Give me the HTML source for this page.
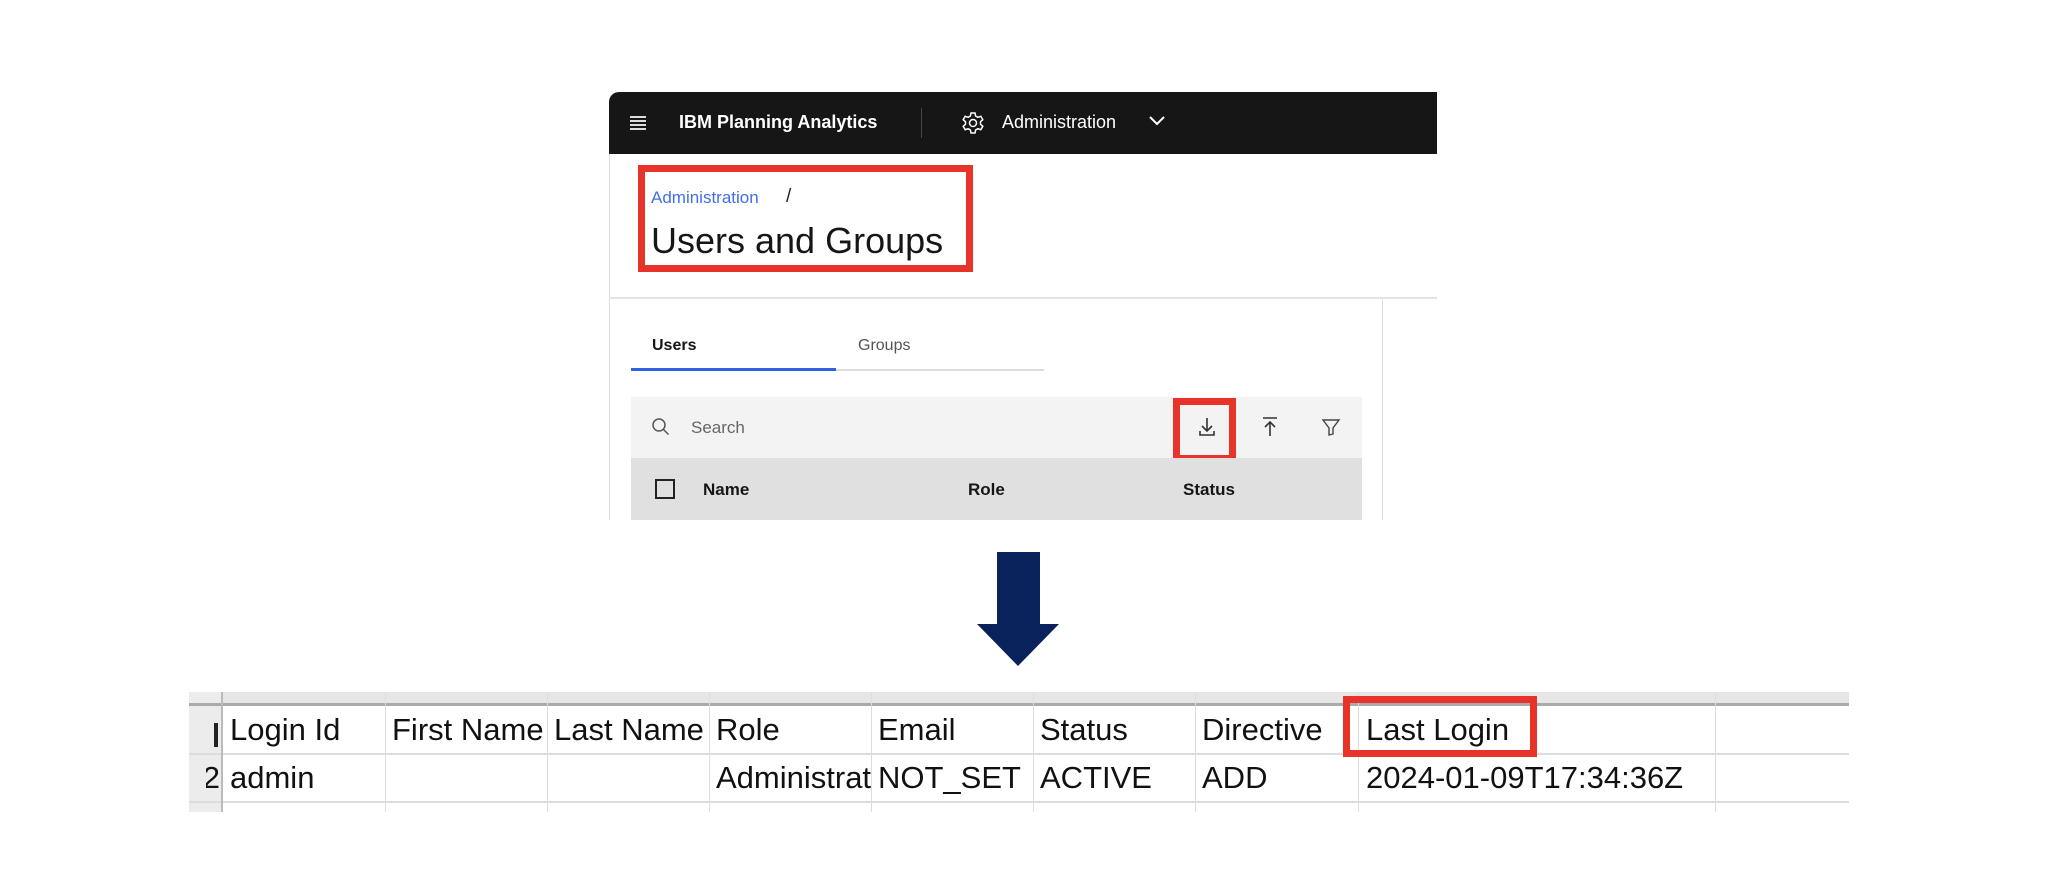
<!DOCTYPE html>
<html><head><meta charset="utf-8"><style>
*{margin:0;padding:0;box-sizing:border-box}
body{width:2048px;height:887px;background:#fff;position:relative;overflow:hidden;font-family:"Liberation Sans",sans-serif}
.a{position:absolute}
.t{position:absolute;white-space:nowrap}
.cell{position:absolute;font-family:"Liberation Sans",sans-serif;font-size:31px;color:#111;white-space:nowrap;overflow:hidden;height:44px;line-height:40px}
</style></head><body>
<div class="a" style="left:609px;top:92px;width:828px;height:62px;background:#161616;border-top-left-radius:10px"></div>
<div class="a" style="left:630px;top:116px;width:16px;height:2px;background:#ddd;box-shadow:0 4px 0 #ddd,0 8px 0 #ddd,0 12px 0 #ddd"></div>
<div class="t" style="left:679px;top:112px;font-size:18px;font-weight:bold;color:#fff">IBM Planning Analytics</div>
<div class="a" style="left:921px;top:108px;width:1px;height:30px;background:#444"></div>
<svg class="a" style="left:961px;top:111px" width="24" height="24" viewBox="0 0 24 24" fill="none" stroke="#fff" stroke-width="1.5"><circle cx="12" cy="12" r="3.5"/><path d="M10 2h4l.6 3 2.3 1.3 2.9-1 2 3.4-2.3 2v2.6l2.3 2-2 3.4-2.9-1-2.3 1.3-.6 3h-4l-.6-3-2.3-1.3-2.9 1-2-3.4 2.3-2v-2.6l-2.3-2 2-3.4 2.9 1L9.4 5z"/></svg>
<div class="t" style="left:1002px;top:112px;font-size:18px;color:#fff">Administration</div>
<svg class="a" style="left:1148px;top:114px" width="18" height="14" viewBox="0 0 18 14" fill="none" stroke="#fff" stroke-width="2"><path d="M2 3l7 7 7-7"/></svg>
<div class="a" style="left:609px;top:154px;width:1px;height:366px;background:#ddd"></div>
<div class="a" style="left:609px;top:297px;width:828px;height:2px;background:#e4e4e4"></div>
<div class="a" style="left:1382px;top:299px;width:1px;height:221px;background:#ddd"></div>
<div class="t" style="left:651px;top:188px;font-size:17px;color:#3f6fe8">Administration</div>
<div class="t" style="left:786px;top:186px;font-size:19px;color:#222">/</div>
<div class="t" style="left:651px;top:220px;font-size:36px;color:#161616">Users and Groups</div>
<div class="a" style="left:638px;top:165px;width:335px;height:107px;border:7px solid #e8332a"></div>
<div class="t" style="left:652px;top:337px;font-size:16px;font-weight:bold;color:#161616">Users</div>
<div class="t" style="left:858px;top:337px;font-size:16px;color:#555">Groups</div>
<div class="a" style="left:631px;top:368px;width:205px;height:3px;background:#2f62e0"></div>
<div class="a" style="left:836px;top:369px;width:208px;height:2px;background:#ddd"></div>
<div class="a" style="left:631px;top:397px;width:731px;height:61px;background:#f3f3f3"></div>
<svg class="a" style="left:651px;top:417px" width="20" height="20" viewBox="0 0 20 20" fill="none" stroke="#555" stroke-width="1.5"><circle cx="8" cy="8" r="6"/><path d="M12.5 12.5l5 5"/></svg>
<div class="t" style="left:691px;top:418px;font-size:17px;color:#666">Search</div>
<svg class="a" style="left:1197px;top:416px" width="20" height="22" viewBox="0 0 20 22" fill="none" stroke="#333" stroke-width="1.6"><path d="M10 2v13M5 10l5 5 5-5M3 15v4h14v-4"/></svg>
<svg class="a" style="left:1260px;top:416px" width="20" height="22" viewBox="0 0 20 22" fill="none" stroke="#333" stroke-width="1.6"><path d="M3 2h14M10 20V6M5 11l5-5 5 5"/></svg>
<svg class="a" style="left:1321px;top:417px" width="20" height="20" viewBox="0 0 20 20" fill="none" stroke="#444" stroke-width="1.4"><path d="M2 3h16l-6 8v6l-4 1v-7z"/></svg>
<div class="a" style="left:1173px;top:398px;width:63px;height:64px;border:7px solid #e8332a"></div>
<div class="a" style="left:631px;top:458px;width:731px;height:62px;background:#e0e0e0"></div>
<div class="a" style="left:655px;top:479px;width:20px;height:20px;border:2px solid #222"></div>
<div class="t" style="left:703px;top:480px;font-size:17px;font-weight:bold;color:#161616">Name</div>
<div class="t" style="left:968px;top:480px;font-size:17px;font-weight:bold;color:#161616">Role</div>
<div class="t" style="left:1183px;top:480px;font-size:17px;font-weight:bold;color:#161616">Status</div>
<svg class="a" style="left:977px;top:552px" width="82" height="114" viewBox="0 0 82 114"><path d="M20 0h43v72h19L41 114 0 72h20z" fill="#0a225c"/></svg>
<div class="a" style="left:189px;top:692px;width:1660px;height:13px;background:#e6e6e6"></div>
<div class="a" style="left:189px;top:692px;width:33px;height:120px;background:#ececec"></div>
<div class="a" style="left:189px;top:703px;width:1660px;height:3px;background:#aaa"></div>
<div class="a" style="left:189px;top:753px;width:1660px;height:2px;background:#ddd"></div>
<div class="a" style="left:189px;top:801px;width:1660px;height:2px;background:#ddd"></div>
<div class="a" style="left:221px;top:692px;width:2px;height:120px;background:#bbb"></div>
<div class="a" style="left:385px;top:692px;width:1px;height:120px;background:#ddd"></div>
<div class="a" style="left:547px;top:692px;width:1px;height:120px;background:#ddd"></div>
<div class="a" style="left:709px;top:692px;width:1px;height:120px;background:#ddd"></div>
<div class="a" style="left:871px;top:692px;width:1px;height:120px;background:#ddd"></div>
<div class="a" style="left:1033px;top:692px;width:1px;height:120px;background:#ddd"></div>
<div class="a" style="left:1195px;top:692px;width:1px;height:120px;background:#ddd"></div>
<div class="a" style="left:1358px;top:692px;width:1px;height:120px;background:#ddd"></div>
<div class="a" style="left:1715px;top:692px;width:1px;height:120px;background:#ddd"></div>
<div class="a" style="left:214px;top:723px;width:4px;height:24px;background:#222"></div>
<div class="cell" style="left:206px;top:758px;width:14px;direction:rtl">2</div>
<div class="cell" style="left:230px;top:710px;width:154px">Login Id</div>
<div class="cell" style="left:392px;top:710px;width:155px">First Name</div>
<div class="cell" style="left:554px;top:710px;width:155px">Last Name</div>
<div class="cell" style="left:716px;top:710px;width:155px">Role</div>
<div class="cell" style="left:878px;top:710px;width:155px">Email</div>
<div class="cell" style="left:1040px;top:710px;width:155px">Status</div>
<div class="cell" style="left:1202px;top:710px;width:155px">Directive</div>
<div class="cell" style="left:1366px;top:710px;width:200px">Last Login</div>
<div class="cell" style="left:230px;top:758px;width:154px">admin</div>
<div class="cell" style="left:716px;top:758px;width:155px">Administrator</div>
<div class="cell" style="left:878px;top:758px;width:155px">NOT_SET</div>
<div class="cell" style="left:1040px;top:758px;width:155px">ACTIVE</div>
<div class="cell" style="left:1202px;top:758px;width:155px">ADD</div>
<div class="cell" style="left:1366px;top:758px;width:349px">2024-01-09T17:34:36Z</div>
<div class="a" style="left:1343px;top:696px;width:194px;height:61px;border:7px solid #e8332a"></div>
</body></html>
